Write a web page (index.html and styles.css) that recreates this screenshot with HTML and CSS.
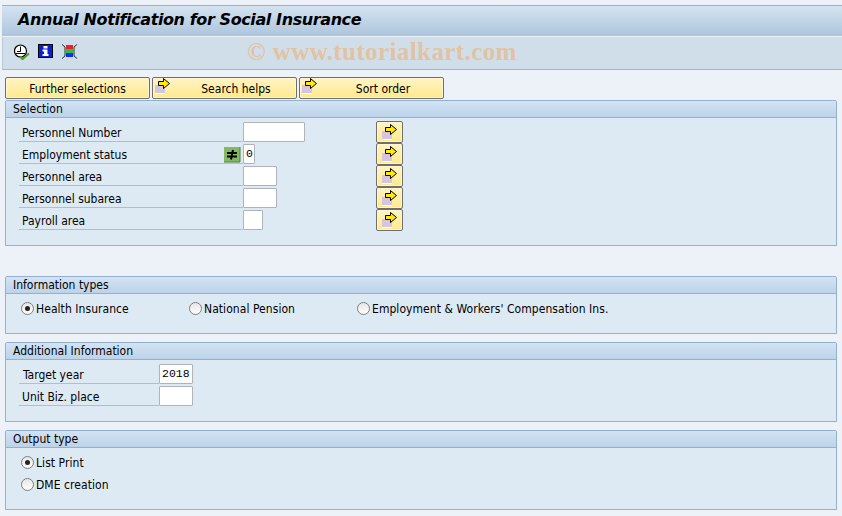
FILE: index.html
```html
<!DOCTYPE html>
<html lang="en">
<head>
<meta charset="utf-8">
<title>Annual Notification for Social Insurance</title>
<link rel="stylesheet" href="styles.css">
</head>
<body>
<svg class="defs" width="0" height="0" aria-hidden="true">
  <symbol id="arrow" viewBox="0 0 16 16">
    <rect x="0" y="7" width="10" height="9" fill="#d5c5e0"/>
    <rect x="0" y="15" width="10" height="1" fill="#fff"/>
    <path d="M3.5 3.5H8.5V0.5L14.5 5.5L8.5 10.5V7.5H3.5Z" fill="#ffea00" stroke="#000" stroke-width="1"/>
  </symbol>
</svg>
<header class="head">
  <h1 class="title">Annual Notification for Social Insurance</h1>
  <div class="toolbar">
    <svg class="tool" width="16" height="16" viewBox="0 0 16 16">
      <circle cx="6.5" cy="7" r="6" fill="#fff" stroke="#000" stroke-width="1.2"/>
      <path d="M6.5 2.5V7.5H3M2 9.5H11" fill="none" stroke="#000"/>
      <path d="M6 12.5L8.5 15L15 9.5" fill="none" stroke="#4f9a2c" stroke-width="2.2"/>
    </svg>
    <svg class="tool" width="16" height="14" viewBox="0 0 16 14">
      <rect x="0.5" y="0.5" width="14" height="13" fill="#0a1fd0" stroke="#000"/>
      <path d="M5.5 2H9.5V4.5H5.5ZM4.5 5.5H9.5V10H10.5V12H4.5V10H6V7.5H4.5Z" fill="#fff"/>
    </svg>
    <svg class="tool" width="16" height="15" viewBox="0 0 16 15">
      <path d="M0 0.5L3 3V12L0 14.5M15 0.5L12 3V12L15 14.5" fill="none" stroke="#000" stroke-width="0.8"/>
      <rect x="4" y="1" width="7" height="4" fill="#f0202a"/>
      <rect x="4" y="5" width="7" height="4" fill="#22c24c"/>
      <rect x="4" y="9" width="7" height="4" fill="#1030f0"/>
    </svg>
  </div>
  <div class="watermark">© www.tutorialkart.com</div>
</header>

<nav class="actions">
  <button class="btn" type="button"><span>Further selections</span></button>
  <button class="btn btn-icon" type="button"><svg class="btn-ico" width="16" height="16"><use href="#arrow"/></svg><span>Search helps</span></button>
  <button class="btn btn-icon" type="button"><svg class="btn-ico" width="16" height="16"><use href="#arrow"/></svg><span>Sort order</span></button>
</nav>

<section class="group group-selection">
  <h2 class="group-title">Selection</h2>
  <div class="group-body rows">
    <div class="row sel-row">
      <label class="lab">Personnel Number</label>
      <div class="cell"><span class="field w-62"></span></div>
      <button class="multi" type="button"><svg width="16" height="16"><use href="#arrow"/></svg></button>
    </div>
    <div class="row sel-row">
      <label class="lab">Employment status
        <svg class="neq" width="17" height="16" viewBox="0 0 17 16">
          <rect width="16" height="15" fill="#84b963"/>
          <path d="M16 0V15H0" fill="none" stroke="#4e7a3a" stroke-width="1"/>
          <path d="M3 6H13M3 9.5H13M9 3L7 12.5" stroke="#000" stroke-width="2" fill="none"/>
        </svg>
      </label>
      <div class="cell"><span class="field w-12 val mono">0</span></div>
      <button class="multi" type="button"><svg width="16" height="16"><use href="#arrow"/></svg></button>
    </div>
    <div class="row sel-row">
      <label class="lab">Personnel area</label>
      <div class="cell"><span class="field w-34"></span></div>
      <button class="multi" type="button"><svg width="16" height="16"><use href="#arrow"/></svg></button>
    </div>
    <div class="row sel-row">
      <label class="lab">Personnel subarea</label>
      <div class="cell"><span class="field w-34"></span></div>
      <button class="multi" type="button"><svg width="16" height="16"><use href="#arrow"/></svg></button>
    </div>
    <div class="row sel-row">
      <label class="lab">Payroll area</label>
      <div class="cell"><span class="field w-20"></span></div>
      <button class="multi" type="button"><svg width="16" height="16"><use href="#arrow"/></svg></button>
    </div>
  </div>
</section>

<section class="group group-info">
  <h2 class="group-title">Information types</h2>
  <div class="group-body radio-cols">
    <div class="radio on"><i class="dot"></i><span class="radio-text">Health Insurance</span></div>
    <div class="radio"><i class="dot"></i><span class="radio-text">National Pension</span></div>
    <div class="radio"><i class="dot"></i><span class="radio-text">Employment &amp; Workers' Compensation Ins.</span></div>
  </div>
</section>

<section class="group group-add">
  <h2 class="group-title">Additional Information</h2>
  <div class="group-body rows">
    <div class="row add-row">
      <label class="lab lab-shift">Target year</label>
      <div class="cell"><span class="field w-34 val mono">2018</span></div>
    </div>
    <div class="row add-row">
      <label class="lab">Unit Biz. place</label>
      <div class="cell"><span class="field w-34"></span></div>
    </div>
  </div>
</section>

<section class="group group-out">
  <h2 class="group-title">Output type</h2>
  <div class="group-body radio-rows">
    <div class="radio on"><i class="dot"></i><span class="radio-text">List Print</span></div>
    <div class="radio"><i class="dot"></i><span class="radio-text">DME creation</span></div>
  </div>
</section>
</body>
</html>
```

FILE: styles.css
```css
* { box-sizing: border-box; }
html, body { margin: 0; padding: 0; }
body {
  width: 842px;
  height: 516px;
  overflow: hidden;
  background: #edf2f9;
  font-family: "DejaVu Sans Condensed", "DejaVu Sans", sans-serif;
  font-stretch: condensed;
  font-size: 12px;
  color: #000;
  padding-top: 5px;
}
.defs { position: absolute; }

/* Header */
.head { position: relative; margin-left: 2px; }
.title {
  margin: 0;
  height: 31px;
  padding: 3px 0 0 16px;
  border-top: 1px solid #a3b1bf;
  background: linear-gradient(#d4e3f0, #adc5dd);
  font-family: "DejaVu Sans", sans-serif;
  font-stretch: normal;
  font-style: italic;
  font-weight: bold;
  font-size: 16px;
  line-height: 22px;
  letter-spacing: -0.4px;
  white-space: nowrap;
}
.toolbar {
  display: flex;
  align-items: flex-start;
  height: 33px;
  margin-top: 1px;
  padding: 7px 0 0 11px;
  gap: 8px;
  background: #d0dee9;
  border-bottom: 1px solid #a5b6c6;
  border-left: 1px solid #b9c8d6;
}
.watermark {
  position: absolute;
  left: 245px;
  top: 33px;
  font-family: "Liberation Serif", serif;
  font-stretch: normal;
  font-weight: bold;
  font-size: 25px;
  letter-spacing: 0.4px;
  line-height: 28px;
  color: rgba(240, 170, 100, .55);
  white-space: nowrap;
}

/* Application toolbar */
.actions { display: flex; gap: 2px; margin: 7px 0 1px 5px; }
.btn {
  position: relative;
  width: 145px;
  height: 22px;
  padding: 0;
  border: 1px solid #6f6f6f;
  border-radius: 2px;
  background: linear-gradient(#fff4c4, #ffe98e);
  box-shadow: inset 0 0 0 1px #fff6d0;
  font: inherit;
  color: #000;
  text-align: center;
}
.btn-icon { padding-left: 23px; }
.btn span { display: block; line-height: 22px; }
.btn-ico { position: absolute; left: 2px; top: 0; }

/* Groups */
.group {
  margin: 0 5px 0 5px;
  border: 1px solid #92b0d0;
  border-radius: 2px 2px 0 0;
  background: #deeaf3;
}
.group-title {
  margin: 0;
  height: 17px;
  padding-left: 7px;
  font-size: 12px;
  font-weight: normal;
  line-height: 17px;
  background: linear-gradient(#d3e3f3, #bcd3ea);
  border-bottom: 1px solid #92b0d0;
}
.group-selection { height: 146px; }
.group-info { height: 58px; margin-top: 30px; }
.group-add { height: 80px; margin-top: 8px; }
.group-out { height: 80px; margin-top: 8px; }

.rows { padding: 3px 0 0 13px; }
.row { display: grid; height: 22px; }
.sel-row { grid-template-columns: 224px 133px 27px; }
.add-row { grid-template-columns: 140px 40px; }
.lab {
  position: relative;
  display: block;
  height: 21px;
  padding: 4px 0 0 3px;
  line-height: 17px;
  border-bottom: 1px solid #b6bec4;
}
.lab-shift { padding-left: 4px; }
.neq { position: absolute; right: 2px; top: 4px; }
.cell { display: flex; align-items: flex-start; padding-top: 1px; }
.field {
  display: block;
  height: 20px;
  background: #fff;
  border: 1px solid #b0b4b8;
  border-radius: 1px;
  line-height: 18px;
  padding-left: 2px;
  color: #000;
}
.w-62 { width: 62px; }
.w-34 { width: 34px; }
.w-20 { width: 20px; }
.w-12 { width: 12px; }
.mono { font-family: "Liberation Mono", monospace; font-stretch: normal; font-size: 11.5px; }
.multi {
  display: flex;
  align-items: center;
  justify-content: center;
  width: 27px;
  height: 22px;
  padding: 0;
  border: 1px solid #6f6f6f;
  border-radius: 2px;
  background: linear-gradient(#fff4c4, #ffe98e);
  box-shadow: inset 0 0 0 1px #fff6d0;
}

/* Radios */
.radio { display: flex; align-items: center; height: 22px; white-space: nowrap; }
.radio-text { position: relative; top: 1px; letter-spacing: 0.06px; }
.dot {
  position: relative;
  flex: none;
  width: 13px;
  height: 13px;
  margin-right: 2px;
  border: 1px solid #7e7e7e;
  border-radius: 50%;
  background: linear-gradient(#e6e6e6, #fff);
}
.on .dot::after {
  content: "";
  position: absolute;
  left: 3px;
  top: 3px;
  width: 5px;
  height: 5px;
  border-radius: 50%;
  background: #222;
}
.radio-cols {
  display: grid;
  grid-template-columns: 168px 168px auto;
  padding: 3px 0 0 15px;
}
.radio-rows { padding: 3px 0 0 15px; }
```
